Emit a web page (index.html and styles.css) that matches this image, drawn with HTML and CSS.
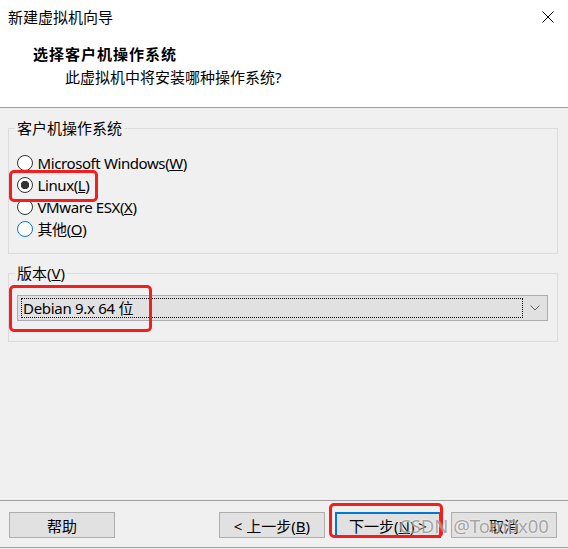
FILE: index.html
```html
<!DOCTYPE html>
<html lang="zh-CN">
<head>
    <meta charset="UTF-8">
    <meta name="viewport" content="width=device-width, initial-scale=1.0">
    <title>新建虚拟机向导</title>
    <link rel="stylesheet" href="styles.css">
</head>
<body>
    <div class="header">
        <div class="titlebar">
            <span class="title">新建虚拟机向导</span>
            <svg class="close" width="12" height="12" viewBox="0 0 12 12">
                <path d="M0.5 0.5 L11.5 11.5 M11.5 0.5 L0.5 11.5" stroke="#000" stroke-width="1" fill="none"/>
            </svg>
        </div>
        <div class="heading">选择客户机操作系统</div>
        <div class="subheading">此虚拟机中将安装哪种操作系统?</div>
    </div>

    <div class="main">
        <fieldset class="group">
            <legend>客户机操作系统</legend>
            <div class="options">
                <label class="opt"><input type="radio" name="os"> Microsoft Windows(<u>W</u>)</label>
                <label class="opt"><input type="radio" name="os" checked> Linux(<u>L</u>)</label>
                <label class="opt"><input type="radio" name="os"> VMware ESX(<u>X</u>)</label>
                <label class="opt"><input type="radio" name="os" class="hover"> 其他(<u>O</u>)</label>
            </div>
        </fieldset>

        <fieldset class="group version">
            <legend>版本(<u>V</u>)</legend>
            <div class="combo">
                <div class="combo-value">Debian 9.x 64 位</div>
                <div class="combo-arrow">
                    <svg width="10" height="6" viewBox="0 0 10 6">
                        <path d="M0.5 0.5 L5 5 L9.5 0.5" stroke="#606060" stroke-width="1" fill="none"/>
                    </svg>
                </div>
            </div>
        </fieldset>
    </div>

    <div class="footer">
        <button class="btn">帮助</button>
        <div class="nav">
            <button class="btn">&lt; 上一步(<u>B</u>)</button>
            <button class="btn primary">下一步(<u>N</u>) &gt;</button>
            <button class="btn">取消</button>
        </div>
    </div>

    <!-- red annotation boxes -->
    <div class="mark mark-linux"></div>
    <div class="mark mark-version"></div>
    <div class="mark mark-next"></div>

    <div class="watermark">CSDN @Tom0x00</div>
</body>
</html>
```

FILE: styles.css
```css
body {
    margin: 0;
    width: 568px;
    height: 549px;
    background: #f0f0f0;
    color: #000;
    font-family: "Noto Sans", "Noto Sans CJK SC", sans-serif;
    font-size: 15px;
    display: flex;
    flex-direction: column;
    position: relative;
    overflow: hidden;
}

.header {
    background: #fff;
    height: 107px;
    border-bottom: 1px solid #a0a0a0;
}

.titlebar {
    display: flex;
    justify-content: space-between;
    align-items: center;
    padding: 8px 14px 0 8px;
    height: 18px;
    line-height: 18px;
}

.close {
    display: block;
}

.heading {
    margin-top: 18px;
    padding-left: 33px;
    font-weight: bold;
    letter-spacing: 1px;
    line-height: 20px;
}

.subheading {
    margin-top: 3px;
    padding-left: 65px;
    line-height: 20px;
}

.main {
    flex: 1;
}

.group {
    margin: 10px 10px 0 8px;
    padding: 14px 9px 13px 8px;
    border: 1px solid #dcdcdc;
    min-width: 0;
}

.group legend {
    margin-left: -2px;
    padding: 0 2px;
    line-height: 20px;
}

.opt {
    display: flex;
    align-items: center;
    height: 22px;
    line-height: 22px;
    white-space: pre;
    letter-spacing: -0.4px;
}

.opt input {
    appearance: none;
    width: 16px;
    height: 16px;
    margin: 0 1px 0 0;
    border: 1px solid #333;
    border-radius: 50%;
    background: #fff;
    box-sizing: border-box;
}

.opt input:checked {
    background: radial-gradient(circle, #333 0 4px, #fff 4.5px);
}

.opt input.hover {
    border-color: #0078d7;
}

.version {
    margin-top: 9px;
    padding-top: 12px;
    padding-bottom: 20px;
}

.combo {
    display: flex;
    height: 26px;
    box-sizing: border-box;
    border: 1px solid #adadad;
    background: #e1e1e1;
    padding: 2px 0 2px 3px;
}

.combo-value {
    flex: 1;
    border: 1px dotted #000;
    padding-left: 1px;
    line-height: 18px;
    letter-spacing: -0.3px;
}

.combo-arrow {
    width: 24px;
    display: flex;
    align-items: center;
    justify-content: center;
}

.combo-arrow svg {
    display: block;
}

.footer {
    display: flex;
    justify-content: space-between;
    border-top: 1px solid #a0a0a0;
    border-bottom: 1px solid #a0a0a0;
    padding: 11px 11px 9px 9px;
    margin-bottom: 1px;
}

.nav {
    display: flex;
    gap: 10px;
}

.btn {
    width: 106px;
    height: 26px;
    padding: 0;
    border: 1px solid #adadad;
    background: #e1e1e1;
    font-family: inherit;
    font-size: 15px;
    color: #000;
}

.btn.primary {
    border: 2px solid #0078d7;
}

.mark {
    position: absolute;
    border: 3px solid #f51d1d;
    border-radius: 5px;
    box-sizing: border-box;
}

.mark-linux {
    left: 9px;
    top: 170px;
    width: 89px;
    height: 32px;
}

.mark-version {
    left: 9px;
    top: 285px;
    width: 143px;
    height: 47px;
}

.mark-next {
    left: 329px;
    top: 503px;
    width: 114px;
    height: 35px;
}

.watermark {
    position: absolute;
    left: 399px;
    top: 513px;
    font-size: 18.5px;
    line-height: 26px;
    color: rgba(110, 110, 110, 0.6);
    text-shadow: 0 0 2px #fff;
}
```
